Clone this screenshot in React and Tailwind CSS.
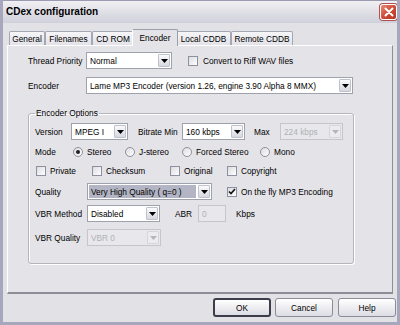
import React from "react";

const Arrow = ({ disabled }) => (
  <svg width="7" height="4" viewBox="0 0 7 4">
    <path d="M0 0h7L3.5 4z" fill={disabled ? "#b4b4bc" : "#000"} />
  </svg>
);

const Combo = ({ w, value, disabled, highlight }) => (
  <div
    className={`${w} h-[17px] border flex items-stretch shrink-0 ${
      disabled ? "border-[#c4c6cc] bg-[#e8e8ec]" : "border-[#9ea2ac] bg-white"
    }`}
  >
    <div className="flex-1 p-px min-w-0 flex">
      <div
        className={`flex-1 flex items-center px-[2px] whitespace-nowrap overflow-hidden ${
          highlight ? "bg-[#b3b5c4] text-black" : ""
        } ${disabled ? "text-[#aeb0b8]" : "text-black"}`}
      >
        {value}
      </div>
    </div>
    <div
      className={`w-[12px] m-px rounded-[1px] border flex items-center justify-center ${
        disabled
          ? "border-[#d4d6dc] bg-[#ececf0]"
          : "border-[#bfc2cc] bg-gradient-to-b from-[#fbfbfd] to-[#d6d8e0]"
      }`}
    >
      <Arrow disabled={disabled} />
    </div>
  </div>
);

const Check = ({ checked }) => (
  <div className="w-[10px] h-[10px] shrink-0 border border-[#8c90a0] bg-gradient-to-br from-[#dcdce0] to-white flex items-center justify-center">
    {checked && (
      <svg width="8" height="7" viewBox="0 0 8 7">
        <path d="M1 3.5l2 2L7 1" stroke="#111" strokeWidth="1.6" fill="none" />
      </svg>
    )}
  </div>
);

const Radio = ({ checked }) => (
  <div className="w-[10px] h-[10px] shrink-0 rounded-full border border-[#8c90a0] bg-gradient-to-br from-[#dcdce0] to-white flex items-center justify-center">
    {checked && <div className="w-[4px] h-[4px] rounded-full bg-[#202020]" />}
  </div>
);

const tabs = [
  { label: "General", w: "w-[36px]" },
  { label: "Filenames", w: "w-[47px]" },
  { label: "CD ROM", w: "w-[42px]" },
  { label: "Encoder", w: "w-[46px]", active: true },
  { label: "Local CDDB", w: "w-[55px]" },
  { label: "Remote CDDB", w: "w-[62px]" },
];

export default function App() {
  return (
    <div
      className="w-[400px] h-[325px] flex flex-col bg-[#e2e1e6] border-x-[3px] border-b-[3px] border-[#a6a7bc] text-[8.3px] leading-[10px] text-black overflow-hidden"
      style={{ fontFamily: '"Liberation Sans", Arial, sans-serif' }}
    >
      {/* title bar */}
      <div className="h-[23px] -mx-[3px] shrink-0 flex items-center border-t border-[#9a9bb0] bg-gradient-to-b from-[#f0f0f4] via-[#dfdfe6] to-[#cfd0da]">
        <span className="ml-[6px] text-[10px] font-bold leading-none">CDex configuration</span>
        <div className="ml-auto mr-[3px] w-[17px] h-[16px] rounded-[3px] border border-[#ffffff] bg-gradient-to-br from-[#e88a78] via-[#cf4a36] to-[#b83222] flex items-center justify-center shadow-[0_0_0_1px_#b05050]">
          <svg width="10" height="10" viewBox="0 0 10 10">
            <path d="M1.5 1.5l7 7M8.5 1.5l-7 7" stroke="#fff" strokeWidth="2" strokeLinecap="round" />
          </svg>
        </div>
      </div>

      {/* tab strip */}
      <div className="mt-[6px] ml-[6px] h-[16px] flex items-end">
        {tabs.map((t) =>
          t.active ? (
            <div
              key={t.label}
              className={`${t.w} -mx-[2px] h-[17px] -mb-px z-10 flex items-center justify-center border-x border-t border-[#9a9fab] border-l-white rounded-t-[2px] bg-[#e4e3e8]`}
            >
              {t.label}
            </div>
          ) : (
            <div
              key={t.label}
              className={`${t.w} h-[14px] flex items-center justify-center border-x border-t border-[#a4a8b4] rounded-t-[2px] bg-gradient-to-b from-[#f6f6f8] to-[#e2e2e8]`}
            >
              {t.label}
            </div>
          )
        )}
      </div>

      {/* panel */}
      <div className="mx-[4px] h-[249px] border-t border-l border-white border-r border-r-[#8d8e98] border-b-2 border-b-[#8d8e98] bg-[#e4e3e8] pl-[20px] pt-[6px]">
        <div className="h-[17px] flex items-center">
          <span className="w-[58px]">Thread Priority</span>
          <Combo w="w-[86px]" value="Normal" />
          <div className="ml-[16px]">
            <Check />
          </div>
          <span className="ml-[5px]">Convert to Riff WAV files</span>
        </div>
        <div className="h-[17px] mt-[8px] flex items-center">
          <span className="w-[58px]">Encoder</span>
          <Combo w="w-[267px]" value="Lame MP3 Encoder (version 1.26, engine 3.90 Alpha 8 MMX)" />
        </div>

        <fieldset className="mt-[14px] w-[326px] h-[156px] border border-[#b4b6be] rounded-[3px] shadow-[inset_1px_1px_0_#fff,1px_1px_0_#fff] pl-[6px]">
          <legend className="ml-[0px] px-[1px] leading-[10px]">Encoder Options</legend>

          <div className="mt-[5px] h-[17px] flex items-center">
            <span className="w-[36px]">Version</span>
            <Combo w="w-[57px]" value="MPEG I" />
            <span className="ml-[10px] w-[44px]">Bitrate Min</span>
            <Combo w="w-[63px]" value="160 kbps" />
            <span className="ml-[9px] w-[26px]">Max</span>
            <Combo w="w-[63px]" value="224 kbps" disabled />
          </div>

          <div className="mt-[5px] h-[14px] flex items-center">
            <span className="w-[38px]">Mode</span>
            <div className="w-[52px] flex items-center gap-[4px]">
              <Radio checked />
              <span>Stereo</span>
            </div>
            <div className="w-[57px] flex items-center gap-[4px]">
              <Radio />
              <span>J-stereo</span>
            </div>
            <div className="w-[78px] flex items-center gap-[4px]">
              <Radio />
              <span>Forced Stereo</span>
            </div>
            <div className="flex items-center gap-[4px]">
              <Radio />
              <span>Mono</span>
            </div>
          </div>

          <div className="mt-[5px] h-[14px] flex items-center pl-px">
            <div className="w-[56px] flex items-center gap-[4px]">
              <Check />
              <span>Private</span>
            </div>
            <div className="w-[78px] flex items-center gap-[4px]">
              <Check />
              <span>Checksum</span>
            </div>
            <div className="w-[57px] flex items-center gap-[4px]">
              <Check />
              <span>Original</span>
            </div>
            <div className="flex items-center gap-[4px]">
              <Check />
              <span>Copyright</span>
            </div>
          </div>

          <div className="mt-[5px] h-[17px] flex items-center">
            <span className="w-[52px]">Quality</span>
            <Combo w="w-[125px]" value="Very High Quality ( q=0 )" highlight />
            <div className="ml-[15px] flex items-center gap-[4px]">
              <Check checked />
              <span>On the fly MP3 Encoding</span>
            </div>
          </div>

          <div className="mt-[5px] h-[17px] flex items-center">
            <span className="w-[52px]">VBR Method</span>
            <Combo w="w-[73px]" value="Disabled" />
            <span className="ml-[15px] w-[23px]">ABR</span>
            <div className="w-[28px] h-[17px] border border-[#c4c6cc] bg-[#e8e8ec] text-[#aeb0b8] flex items-center px-[3px]">0</div>
            <span className="ml-[10px]">Kbps</span>
          </div>

          <div className="mt-[7px] h-[17px] flex items-center">
            <span className="w-[52px]">VBR Quality</span>
            <Combo w="w-[74px]" value="VBR 0" disabled />
          </div>
        </fieldset>
      </div>

      {/* buttons */}
      <div className="mt-[4px] pr-[1px] flex justify-end gap-[4px]">
        <button className="w-[58px] h-[19px] rounded-[3px] border-2 border-[#3c3d4a] bg-gradient-to-b from-white to-[#dcdce4] flex items-center justify-center">
          OK
        </button>
        <button className="w-[58px] h-[19px] rounded-[3px] border border-[#8a8c98] bg-gradient-to-b from-white to-[#dcdce4] flex items-center justify-center">
          Cancel
        </button>
        <button className="w-[58px] h-[19px] ml-px rounded-[3px] border border-[#8a8c98] bg-gradient-to-b from-white to-[#dcdce4] flex items-center justify-center">
          Help
        </button>
      </div>
    </div>
  );
}
